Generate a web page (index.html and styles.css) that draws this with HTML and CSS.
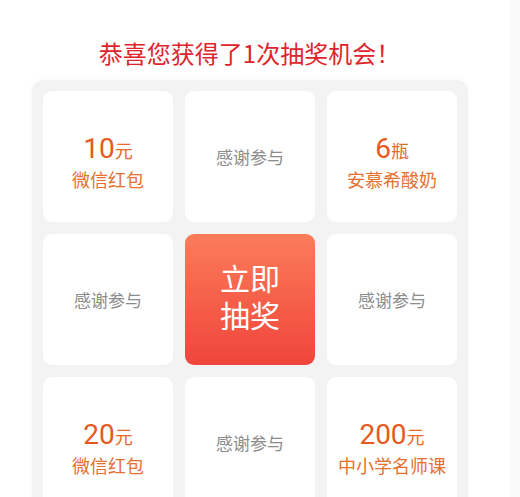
FILE: index.html
```html
<!DOCTYPE html>
<html lang="zh-CN">
<head>
<meta charset="utf-8">
<title>抽奖</title>
<link rel="stylesheet" href="styles.css">
</head>
<body>
<div class="page">
  <main class="main">
    <h1 class="title">恭喜您获得了1次抽奖机会！</h1>
    <div class="board">
      <div class="cell prize">
        <div class="amount">10<span class="unit">元</span></div>
        <div class="label">微信红包</div>
      </div>
      <div class="cell thanks">感谢参与</div>
      <div class="cell prize">
        <div class="amount">6<span class="unit">瓶</span></div>
        <div class="label">安慕希酸奶</div>
      </div>
      <div class="cell thanks">感谢参与</div>
      <div class="cell start">
        <span class="start-line">立即</span>
        <span class="start-line">抽奖</span>
      </div>
      <div class="cell thanks">感谢参与</div>
      <div class="cell prize">
        <div class="amount">20<span class="unit">元</span></div>
        <div class="label">微信红包</div>
      </div>
      <div class="cell thanks">感谢参与</div>
      <div class="cell prize">
        <div class="amount">200<span class="unit">元</span></div>
        <div class="label">中小学名师课</div>
      </div>
    </div>
  </main>
  <div class="edge"></div>
</div>
</body>
</html>
```

FILE: styles.css
```css
html, body {
  margin: 0;
  padding: 0;
  background: #ffffff;
  height: 100%;
  overflow: hidden;
}

body {
  font-family: "Noto Sans CJK SC", "Noto Sans", sans-serif;
}

.page {
  display: flex;
  height: 100%;
}

.main {
  width: 510px;
  flex: none;
}

.edge {
  flex: 1;
  background: #f9f9f9;
}

.title {
  margin: 35px 0 9px 0;
  padding-right: 11px;
  font-size: 24px;
  line-height: 36px;
  font-weight: 400;
  color: #e0242b;
  text-align: center;
}

.board {
  margin-left: 32px;
  width: 436px;
  box-sizing: border-box;
  padding: 11px;
  background: #f3f3f3;
  border-radius: 12px;
  box-shadow: 0 0 6px rgba(0, 0, 0, 0.04);
  display: grid;
  grid-template-columns: repeat(3, 130px);
  grid-auto-rows: 131px;
  gap: 12px;
}

.cell {
  background: #ffffff;
  border-radius: 9px;
  display: flex;
  flex-direction: column;
  align-items: center;
  justify-content: center;
  box-sizing: border-box;
}

.thanks {
  font-size: 17px;
  color: #8c8c8c;
}

.prize {
  padding-top: 12px;
}

.amount {
  font-family: Roboto, "Noto Sans CJK SC", sans-serif;
  font-size: 28px;
  line-height: 32px;
  color: #e75a1c;
}

.unit {
  font-family: "Noto Sans CJK SC", sans-serif;
  font-size: 18px;
  color: #e86a2c;
}

.label {
  font-size: 18px;
  line-height: 26px;
  color: #e5702f;
}

.start {
  background: linear-gradient(180deg, #fc7c5a 0%, #f6604a 50%, #f0453d 100%);
  color: #ffffff;
  font-size: 30px;
  padding-bottom: 8px;
}

.start-line {
  display: block;
  height: 37px;
  line-height: 37px;
}
```
